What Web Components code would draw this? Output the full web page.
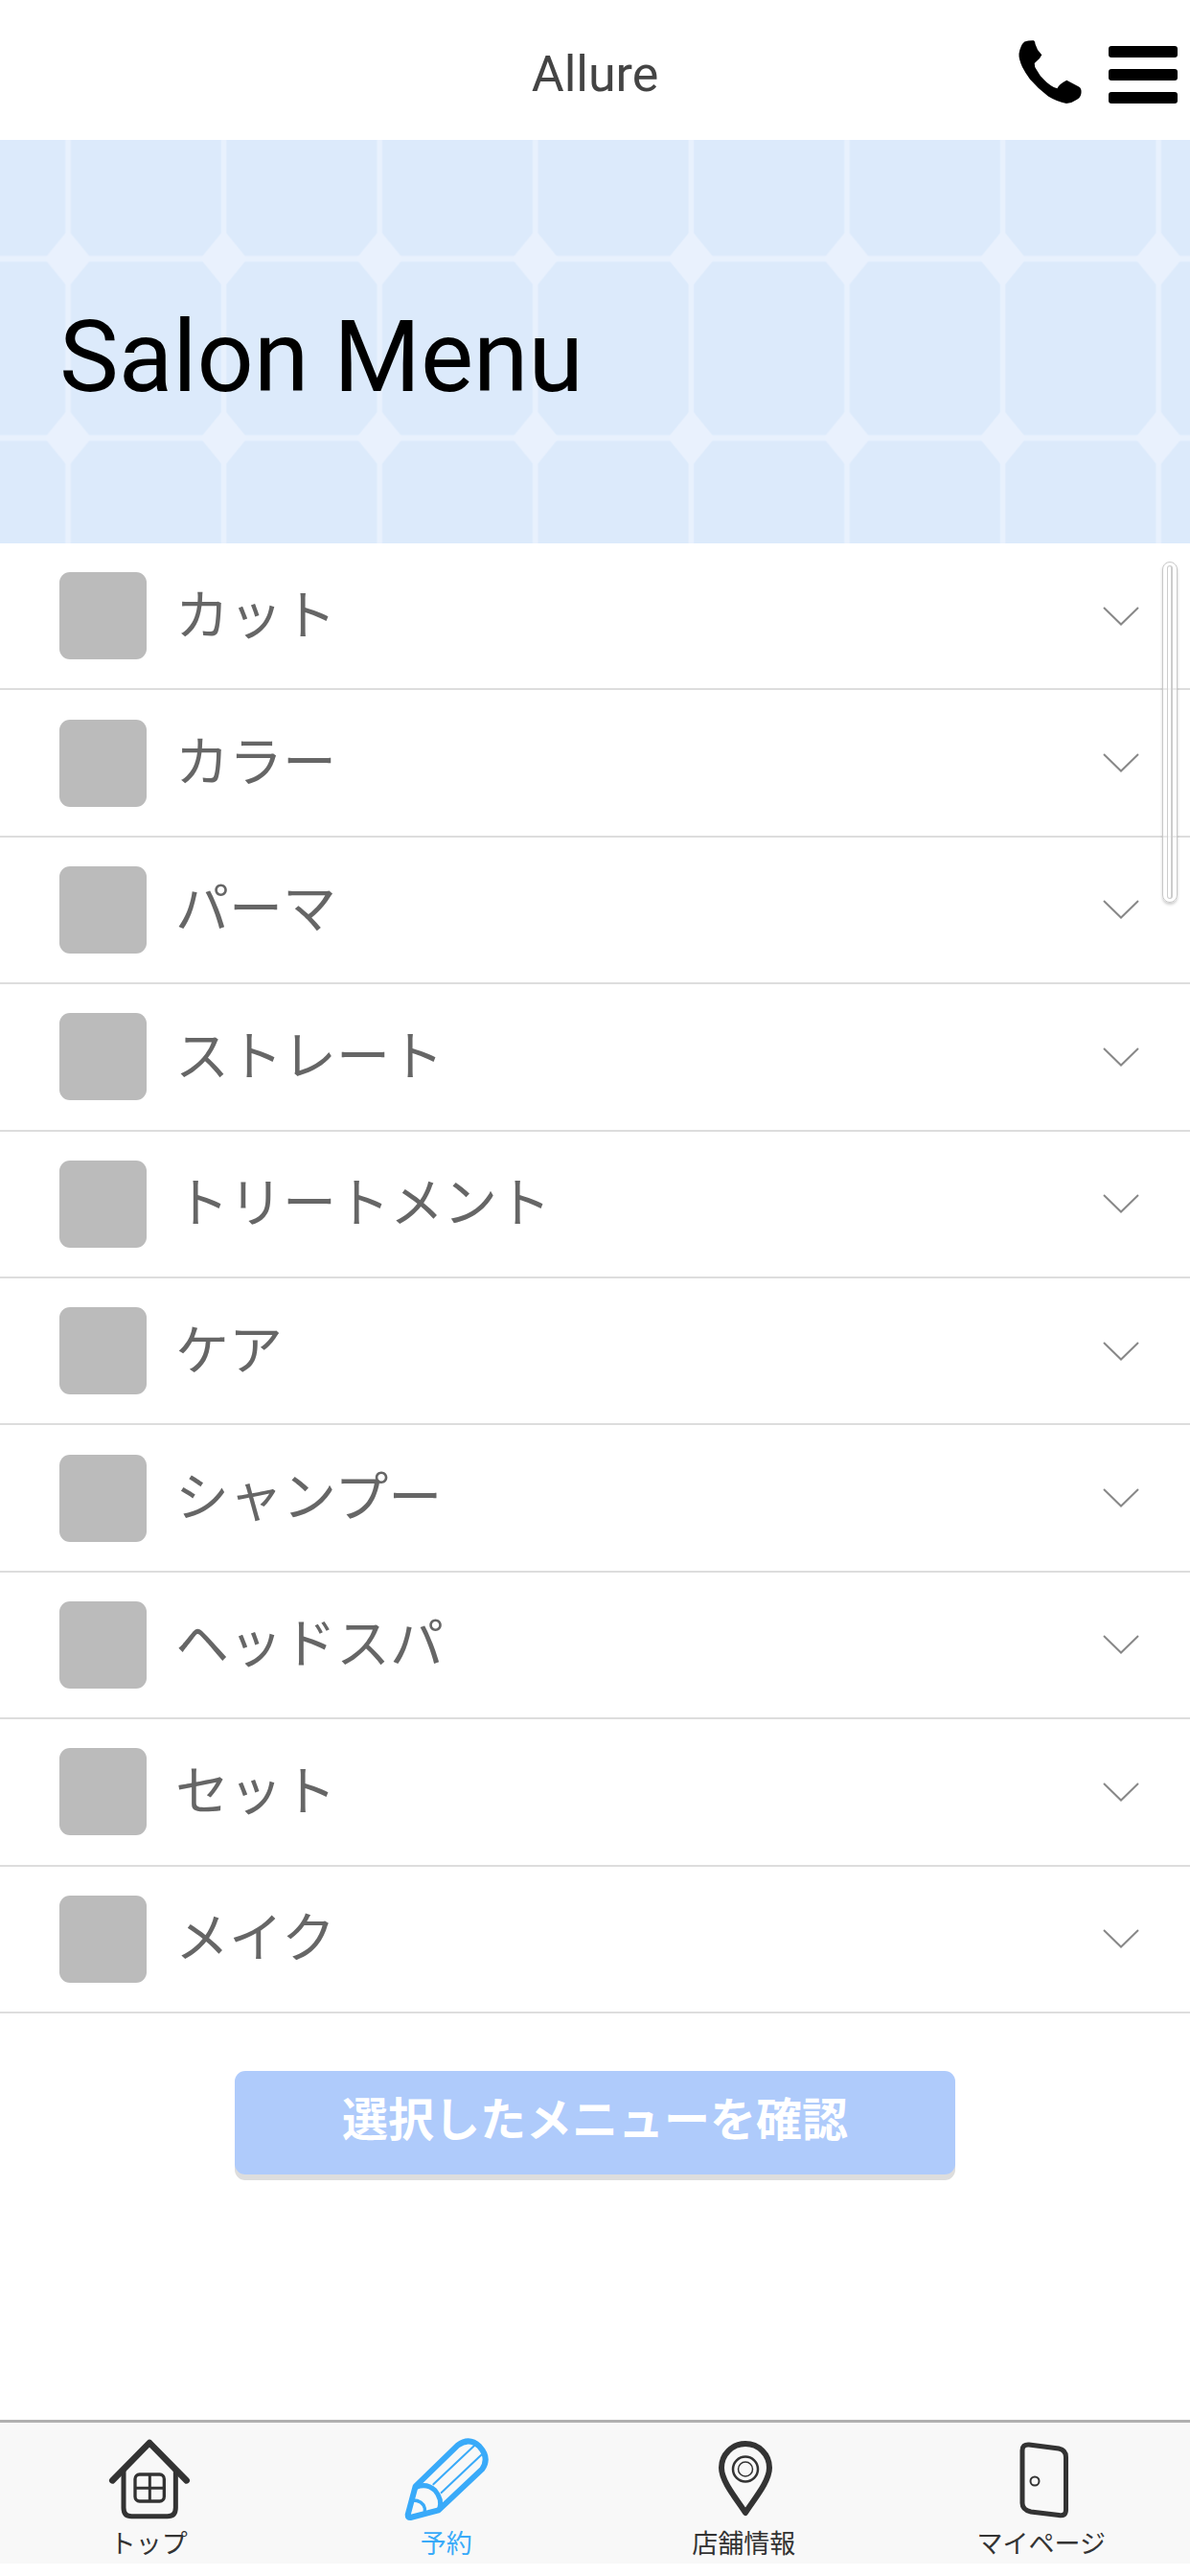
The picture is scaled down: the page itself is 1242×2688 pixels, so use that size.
<!DOCTYPE html>
<html lang="ja">
<head>
<meta charset="utf-8">
<meta name="viewport" content="width=device-width, initial-scale=1">
<title>Allure</title>
<style>
  html, body { margin: 0; background: #fff; }
  body { font-family: Roboto, "Noto Sans CJK JP", sans-serif; color: #444; }
</style>
</head>
<body>
<salon-app></salon-app>
<script>
class BaseElement extends HTMLElement {
  connectedCallback() {
    if (this.shadowRoot) return;
    this.attachShadow({ mode: "open" }).innerHTML = this.render();
  }
}

customElements.define("app-header", class extends BaseElement {
  render() {
    return `<style>
      :host { display: grid; grid-template-columns: 1fr auto 1fr; align-items: center; height: 146px; padding: 0 13px; background: #fff; color: #444; }
      h1 { grid-column: 2; margin: 0; font-size: 52px; line-height: 60px; font-weight: 400; padding-top: 10px; }
      .actions { grid-column: 3; justify-self: end; display: flex; gap: 28px; padding-top: 4px; }
      a, button { display: block; padding: 0; border: 0; background: none; color: #000; cursor: pointer; }
      svg { display: block; fill: currentColor; }
    </style>
    <h1><slot></slot></h1>
    <div class="actions">
      <a href="#call" aria-label="電話"><svg width="66" height="66" viewBox="0 0 66 66"><path d="M6.300 1.500Q11 0 16 .3Q17.500 1.500 17.500 4L20 10L24.300 15.300L22 19L16.700 24Q16.500 28 19 31Q22 37 27 41.500Q33 48 40.400 50.300Q42 46 50.300 41.700L63 48.500Q66 50 65.500 55Q65 60 60.800 62Q56 65.500 50 66Q40 64 31 58.500Q20 50 12 40.700Q7 34 4 28Q0 19 .5 14Q2 5 6.300 1.500Z"/></svg></a>
      <button type="button" aria-label="メニュー"><svg width="72" height="66" viewBox="0 0 72 66"><rect y="6" width="72" height="12" rx="3"/><rect y="30" width="72" height="12" rx="3"/><rect y="54" width="72" height="12" rx="3"/></svg></button>
    </div>`;
  }
});

customElements.define("page-hero", class extends BaseElement {
  render() {
    return `<style>
      :host { display: block; position: relative; background: #dceafb; color: #000; }
      svg { position: absolute; inset: 0; width: 100%; height: 100%; }
      h2 { position: relative; margin: 0; padding: 175px 62px 142px; font-size: 104px; line-height: 104px; font-weight: 400; }
    </style>
    <svg aria-hidden="true">
      <defs><pattern id="tile" x="-10.300" y="30.500" width="162.600" height="187" patternUnits="userSpaceOnUse">
        <path d="M78.500 0h5.500v187h-5.500zM0 90.500h162.600v6H0z" fill="#e8f1fd"/>
        <path d="M81.300 63.500L105.800 93.500L81.300 123.500L56.800 93.500Z" fill="#e9f1fd"/>
      </pattern></defs>
      <rect width="100%" height="100%" fill="url(#tile)"/>
    </svg>
    <h2><slot></slot></h2>`;
  }
});

customElements.define("menu-row", class extends BaseElement {
  render() {
    return `<style>
      :host { display: flex; border-bottom: 2px solid #ddd; color: #666; }
      button { flex: 1; display: flex; align-items: center; gap: 30px; padding: 0 53px 0 62px; border: 0; background: none; font: inherit; font-size: 56px; line-height: 64px; color: inherit; text-align: left; cursor: pointer; }
      .thumb { flex: none; width: 91px; height: 91px; border-radius: 11px; background: #bbb; }
      .label { flex: 1; }
      svg { display: block; fill: none; stroke: #888; stroke-width: 2; }
    </style>
    <button type="button" aria-expanded="false"><span class="thumb"></span><span class="label"><slot></slot></span><svg width="38" height="20" viewBox="0 0 38 20"><path d="M1 1L19 18.500L37 1"/></svg></button>`;
  }
});

customElements.define("menu-list", class extends BaseElement {
  render() {
    return `<style>
      :host { display: grid; grid-auto-rows: 1fr; min-height: 1534px; position: relative; }
      .scroll { position: absolute; top: 19px; right: 13px; width: 16px; height: 356px; box-sizing: border-box; border: 1px solid #c8c8c8; border-radius: 8px; box-shadow: 0 2px 3px rgba(0,0,0,.2); padding: 3px 4px; background: rgba(255,255,255,.4); }
      .scroll i { display: block; height: 100%; box-sizing: border-box; border: 1px solid #ccc; border-right-width: 2px; border-radius: 4px; background: rgba(255,255,255,.6); }
    </style>
    <slot></slot><div class="scroll" aria-hidden="true"><i></i></div>`;
  }
});

customElements.define("confirm-button", class extends BaseElement {
  render() {
    return `<style>
      :host { display: flex; justify-content: center; padding: 60px 0; }
      button { width: 752px; max-width: 90%; height: 108px; padding: 0 0 4px; border: 0; border-radius: 11px; background: #afcbfb; box-shadow: 0 6px 0 #ddd; color: #fff; font: inherit; font-size: 48px; line-height: 58px; font-weight: 700; cursor: pointer; }
    </style>
    <button type="button"><slot></slot></button>`;
  }
});

const ICONS = {
  house: `<svg viewBox="153 129 264 264" stroke-linejoin="round" stroke-linecap="round"><path d="M172 265L288 147L404 265" stroke-width="20"/><path d="M207 234V350Q207 377 232 377H344Q370 377 370 350V234" stroke-width="15"/><rect x="243" y="246" width="91" height="84" rx="14" stroke-width="10"/><path d="M289 248V328M245 289H332" stroke-width="9"/></svg>`,
  pencil: `<svg viewBox="1085 129 264 264" stroke-linejoin="round" stroke-linecap="round"><path d="M1120 283L1252 155Q1288 128 1320 158Q1353 194 1329 229L1192 358L1104 381Q1096 381 1096 372Z" stroke-width="18"/><path d="M1122 286Q1155 272 1181 296Q1205 324 1195 355" stroke-width="15"/><path d="M1112 327Q1142 327 1149 352V368" stroke-width="10"/><path d="M1176 277L1304 156M1201 303L1328 183" stroke-width="6"/></svg>`,
  pin: `<svg viewBox="0 0 88 88"><path d="M46 79C38 66 21 47 21 32A25 25 0 0 1 71 32C71 47 54 66 46 79Z" stroke-width="6" stroke-linejoin="round"/><circle cx="46" cy="33.500" r="13" stroke-width="2.500"/><circle cx="46" cy="33.500" r="7.500" stroke-width="1.500"/></svg>`,
  door: `<svg viewBox="0 0 88 88"><path d="M24 14Q24 7.500 31 8L62 12Q69.500 13.500 69.500 21V76Q69.500 83 62 81.500L33 78Q24 76 24 69Z" stroke-width="5"/><circle cx="37" cy="46" r="4.500" stroke-width="2"/></svg>`
};

customElements.define("tab-item", class extends BaseElement {
  render() {
    return `<style>
      :host { flex: 1; display: block; color: #333; }
      :host([active]) { color: #39aaf9; }
      a { display: flex; flex-direction: column; align-items: center; gap: 8px; color: inherit; text-decoration: none; font-size: 27px; line-height: 32px; }
      svg { display: block; width: 88px; height: 88px; fill: none; stroke: currentColor; }
    </style>
    <a href="#${this.getAttribute("icon")}">${ICONS[this.getAttribute("icon")]}<span><slot></slot></span></a>`;
  }
});

customElements.define("tab-bar", class extends BaseElement {
  render() {
    return `<style>
      :host { display: block; }
      nav { display: flex; padding: 15px 0 4px; border-top: 3px solid #b0b0b0; background: #f8f8f8; }
    </style>
    <nav><slot></slot></nav>`;
  }
});

customElements.define("salon-app", class extends BaseElement {
  render() {
    const menus = ["カット", "カラー", "パーマ", "ストレート", "トリートメント", "ケア", "シャンプー", "ヘッドスパ", "セット", "メイク"];
    return `<style>
      :host { display: flex; flex-direction: column; min-height: 100vh; box-sizing: border-box; padding-bottom: 13px; }
      main { flex: 1; }
    </style>
    <app-header>Allure</app-header>
    <main>
      <page-hero>Salon Menu</page-hero>
      <menu-list>${menus.map(m => `<menu-row>${m}</menu-row>`).join("")}</menu-list>
      <confirm-button>選択したメニューを確認</confirm-button>
    </main>
    <tab-bar>
      <tab-item icon="house">トップ</tab-item>
      <tab-item icon="pencil" active>予約</tab-item>
      <tab-item icon="pin">店舗情報</tab-item>
      <tab-item icon="door">マイページ</tab-item>
    </tab-bar>`;
  }
});
</script>
</body>
</html>
